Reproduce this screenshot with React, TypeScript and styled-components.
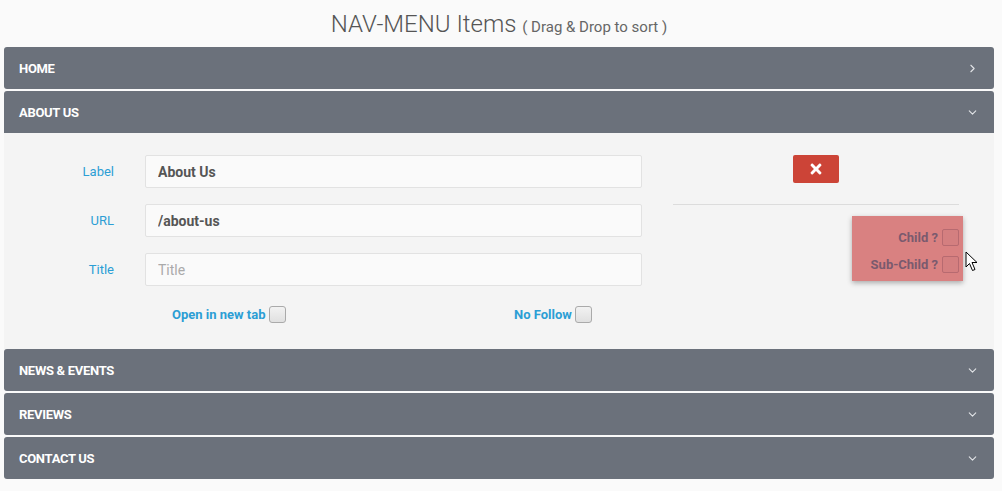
import React from "react";
import styled, { createGlobalStyle } from "styled-components";
import { ChevronRight, ChevronDown } from "lucide-react";
import { FaTimes } from "react-icons/fa";

const GlobalStyle = createGlobalStyle`
  html, body {
    margin: 0;
    padding: 0;
    background: #fafafa;
    font-family: Roboto, "Liberation Sans", Arial, sans-serif;
  }
`;

const Page = styled.div`
  width: 1002px;
  padding: 0 8px 0 4px;
  box-sizing: border-box;
`;

const Title = styled.h2`
  margin: 0;
  height: 47px;
  line-height: 49px;
  text-align: center;
  font-size: 24px;
  font-weight: 300;
  color: #555;
  small {
    font-size: 15px;
    color: #666;
    font-weight: 400;
  }
`;

const Item = styled.div<{ open?: boolean }>`
  margin-bottom: ${({ open }) => (open ? "0" : "2px")};
`;

const Header = styled.div<{ open?: boolean }>`
  height: 42px;
  display: flex;
  align-items: center;
  justify-content: space-between;
  padding: 0 15px 0 15px;
  background: #6b717b;
  color: #fff;
  border-radius: ${({ open }) => (open ? "3px 3px 0 0" : "3px")};
  font-size: 13px;
  font-weight: 700;
  letter-spacing: -0.3px;
  text-transform: uppercase;
  svg {
    color: #e2e4e7;
  }
`;

const Body = styled.div`
  background: #f4f4f4;
  padding: 22px 0 26px;
  display: grid;
  grid-template-columns: 110px 497px 286px;
  column-gap: 31px;
`;

const Fields = styled.div`
  grid-column: 1 / 3;
  display: grid;
  grid-template-columns: 110px 497px;
  column-gap: 31px;
  row-gap: 16px;
  align-items: center;
`;

const FieldLabel = styled.label`
  text-align: right;
  font-size: 13px;
  color: #2c9ed4;
`;

const Input = styled.input`
  height: 33px;
  box-sizing: border-box;
  border: 1px solid #e2e2e2;
  border-radius: 2px;
  background: #fafafa;
  padding: 0 12px;
  font-family: inherit;
  font-size: 14px;
  font-weight: 700;
  color: #555;
  outline: none;
  &::placeholder {
    font-weight: 400;
    color: #aaa;
  }
`;

const Side = styled.div`
  position: relative;
  display: flex;
  flex-direction: column;
  align-items: center;
`;

const DeleteButton = styled.button`
  width: 46px;
  height: 28px;
  border: none;
  border-radius: 2px;
  background: #cc4437;
  color: #fff;
  display: flex;
  align-items: center;
  justify-content: center;
  padding: 0;
`;

const Rule = styled.hr`
  width: 100%;
  margin: 21px 0 0;
  border: none;
  border-top: 1px solid #dcdcdc;
`;

const ChildPopup = styled.div`
  position: absolute;
  top: 61px;
  right: -4px;
  width: 111px;
  height: 65px;
  box-sizing: border-box;
  padding: 13px 4px 0 0;
  background: #d98181;
  box-shadow: 0 2px 5px rgba(0, 0, 0, 0.3);
  display: flex;
  flex-direction: column;
  align-items: flex-end;
  gap: 10px;
`;

const PopupOption = styled.div`
  display: flex;
  align-items: center;
  gap: 4px;
  font-size: 13px;
  font-weight: 700;
  color: #7a5a6e;
`;

const PopupBox = styled.span`
  width: 15px;
  height: 15px;
  border: 1px solid #b76a70;
  border-radius: 2px;
  background: #d47f80;
`;

const Cursor = styled.svg`
  position: absolute;
  top: 96px;
  right: -20px;
`;

const Options = styled.div`
  grid-column: 1 / 4;
  display: grid;
  grid-template-columns: 342px auto;
  padding-left: 168px;
  margin-top: 20px;
`;

const Option = styled.label`
  display: flex;
  align-items: center;
  gap: 3px;
  font-size: 13px;
  font-weight: 700;
  color: #2c9ed4;
`;

const Box = styled.span`
  width: 15px;
  height: 15px;
  border: 1px solid #aaa;
  border-radius: 3px;
  background: linear-gradient(#f2f2f2, #e0e0e0);
`;

const items = ["Home", "About Us", "News & Events", "Reviews", "Contact Us"];

export default function App() {
  return (
    <Page>
      <GlobalStyle />
      <Title>
        NAV-MENU Items <small>( Drag &amp; Drop to sort )</small>
      </Title>
      {items.map((name, i) => {
        const open = name === "About Us";
        return (
          <Item key={name} open={open}>
            <Header open={open}>
              <span>{name}</span>
              {i === 0 ? (
                <ChevronRight size={13} strokeWidth={2} />
              ) : (
                <ChevronDown size={13} strokeWidth={2} />
              )}
            </Header>
            {open && (
              <Body>
                <Fields>
                  <FieldLabel>Label</FieldLabel>
                  <Input defaultValue="About Us" />
                  <FieldLabel>URL</FieldLabel>
                  <Input defaultValue="/about-us" />
                  <FieldLabel>Title</FieldLabel>
                  <Input placeholder="Title" />
                </Fields>
                <Side>
                  <DeleteButton>
                    <FaTimes size={16} />
                  </DeleteButton>
                  <Rule />
                  <ChildPopup>
                    <PopupOption>
                      Child ? <PopupBox />
                    </PopupOption>
                    <PopupOption>
                      Sub-Child ? <PopupBox />
                    </PopupOption>
                  </ChildPopup>
                  <Cursor width="14" height="21" viewBox="0 0 14 21">
                    <path
                      d="M1 1 L1 16 L4.5 12.5 L7.5 19.5 L10 18.5 L7 11.5 L12 11.5 Z"
                      fill="#fff"
                      stroke="#000"
                      strokeWidth="1"
                      strokeLinejoin="round"
                    />
                  </Cursor>
                </Side>
                <Options>
                  <Option>
                    Open in new tab <Box />
                  </Option>
                  <Option>
                    No Follow <Box />
                  </Option>
                </Options>
              </Body>
            )}
          </Item>
        );
      })}
    </Page>
  );
}
